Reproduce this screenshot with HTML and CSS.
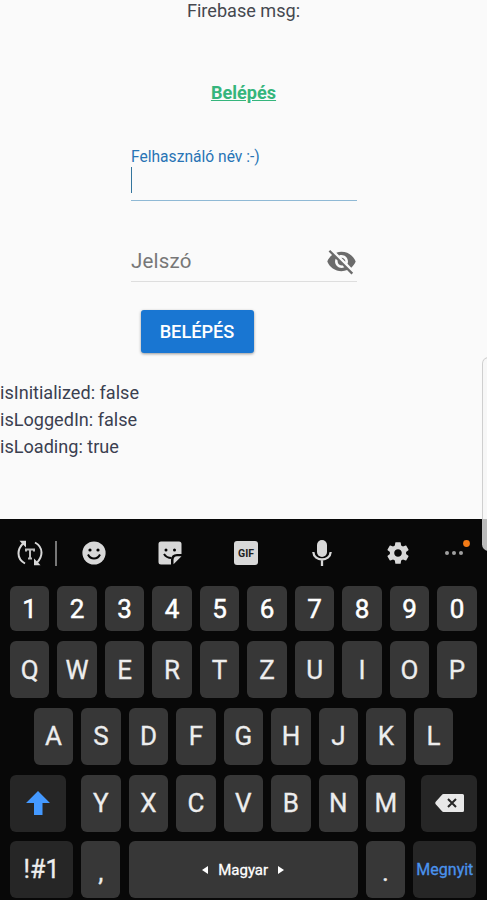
FILE: index.html
```html
<!DOCTYPE html>
<html lang="hu">
<head>
    <meta charset="UTF-8">
    <meta name="viewport" content="width=device-width, initial-scale=1.0">
    <title>Belépés</title>
    <link rel="stylesheet" href="styles.css">
</head>
<body>

<main class="page">
    <div class="message">Firebase msg:</div>
    <a class="login-link" href="#">Belépés</a>

    <form class="login-form">
        <div class="field focused">
            <label class="field-label">Felhasználó név :-)</label>
            <div class="caret"></div>
        </div>
        <div class="field password">
            <label class="placeholder">Jelszó</label>
            <svg class="eye" viewBox="0 0 24 24"><path d="M12 7c2.76 0 5 2.24 5 5 0 .65-.13 1.26-.36 1.83l2.92 2.92c1.51-1.26 2.7-2.89 3.43-4.75-1.73-4.39-6-7.5-11-7.5-1.4 0-2.74.25-3.98.7l2.16 2.16C10.74 7.13 11.35 7 12 7zM2 4.27l2.28 2.28.46.46C3.08 8.3 1.78 10.02 1 12c1.73 4.39 6 7.5 11 7.5 1.55 0 3.03-.3 4.38-.84l.42.42L19.73 22 21 20.73 3.27 3 2 4.27zM7.53 9.8l1.55 1.55c-.05.21-.08.43-.08.65 0 1.66 1.34 3 3 3 .22 0 .44-.03.65-.08l1.55 1.55c-.67.33-1.41.53-2.2.53-2.76 0-5-2.24-5-5 0-.79.2-1.53.53-2.2zm4.31-.78l3.15 3.15.02-.16c0-1.66-1.34-3-3-3l-.17.01z"/></svg>
        </div>
        <button class="submit" type="button">BELÉPÉS</button>
    </form>

    <div class="state">
        <div>isInitialized: false</div>
        <div>isLoggedIn: false</div>
        <div>isLoading: true</div>
    </div>
</main>

<!-- keyboard -->
<section class="keyboard">
    <div class="toolbar">
        <svg class="tool translate" viewBox="0 0 26 26">
            <g fill="none" stroke="currentColor" stroke-width="2">
                <path d="M8 23.500C3.500 21 1.500 17.500 1.500 13.500C1.500 9.500 3 6.500 6 3.500"/>
                <path d="M18 2.500C22.500 5 24.500 8.500 24.500 12.500C24.500 16.500 23 19.500 20 22.500"/>
            </g>
            <path d="M2.500 .8H9V7.500L6.500 5L4.500 3Z" fill="currentColor"/>
            <path d="M23.500 25.200H17V18.500L19.500 21L21.500 23Z" fill="currentColor"/>
            <path d="M9 11.500V9.500H17V11.500M13 9.500V18.500M11 18.500H15" fill="none" stroke="#bdbdbd" stroke-width="2"/>
        </svg>
        <span class="separator"></span>
        <svg class="tool" viewBox="0 0 26 26">
            <circle cx="13" cy="13" r="11.600" fill="currentColor"/>
            <circle cx="9" cy="10" r="1.600"/><circle cx="17" cy="10" r="1.600"/>
            <path d="M7 14.500C9.500 19.800 16.500 19.800 19 14.500" fill="none" stroke="#080808" stroke-width="2"/>
        </svg>
        <svg class="tool" viewBox="0 0 26 26">
            <path d="M4 1.500H22Q24.500 1.500 24.500 4V14H20Q14 14 14 20V24.500H4Q1.500 24.500 1.500 22V4Q1.500 1.500 4 1.500Z" fill="currentColor"/>
            <path d="M24.500 16.200L16.500 24.300V20Q16.500 16.200 20 16.200Z" fill="currentColor"/>
            <circle cx="9" cy="10" r="1.500"/><circle cx="17.500" cy="10" r="1.500"/>
            <path d="M7 14Q9.500 18 14.500 18" fill="none" stroke="#080808" stroke-width="2"/>
        </svg>
        <span class="tool gif"><b>GIF</b></span>
        <svg class="tool" viewBox="0 0 26 26">
            <rect x="8" y="0" width="10" height="17" rx="5" fill="currentColor"/>
            <path d="M4.300 12C5 22 21 22 21.700 12M13 19.500V26" fill="none" stroke="currentColor" stroke-width="2.300"/>
        </svg>
        <svg class="tool gear" viewBox="0 0 24 24"><path fill="currentColor" d="M19.430 12.980c.04-.32.07-.64.07-.98s-.03-.66-.07-.98l2.110-1.650c.19-.15.24-.42.12-.64l-2-3.460c-.12-.22-.39-.3-.61-.22l-2.490 1c-.52-.4-1.080-.73-1.690-.98l-.38-2.650C14.460 2.180 14.250 2 14 2h-4c-.25 0-.46.18-.49.42l-.38 2.650c-.61.25-1.170.59-1.690.98l-2.490-1c-.23-.09-.49 0-.61.22l-2 3.460c-.13.22-.07.49.12.64l2.110 1.650c-.04.32-.07.65-.07.98s.03.66.07.98l-2.110 1.650c-.19.15-.24.42-.12.64l2 3.460c.12.22.39.3.61.22l2.490-1c.52.4 1.080.73 1.690.98l.38 2.650c.03.24.24.42.49.42h4c.25 0 .46-.18.49-.42l.38-2.650c.61-.25 1.170-.59 1.690-.98l2.490 1c.23.09.49 0 .61-.22l2-3.460c.12-.22.07-.49-.12-.64l-2.110-1.650zM12 15.500c-1.930 0-3.500-1.570-3.500-3.500s1.570-3.500 3.500-3.500 3.500 1.570 3.500 3.500-1.570 3.500-3.500 3.500z"/></svg>
        <svg class="tool more" viewBox="0 0 26 26">
            <g fill="#a0a0a0"><circle cx="3" cy="13" r="2"/><circle cx="10" cy="13" r="2"/><circle cx="17" cy="13" r="2"/></g>
            <circle cx="22.500" cy="3.500" r="3.400" fill="#f37b16"/>
        </svg>
    </div>

    <div class="row numbers">
        <span class="key">1</span><span class="key">2</span><span class="key">3</span><span class="key">4</span><span class="key">5</span><span class="key">6</span><span class="key">7</span><span class="key">8</span><span class="key">9</span><span class="key">0</span>
    </div>
    <div class="row">
        <span class="key">Q</span><span class="key">W</span><span class="key">E</span><span class="key">R</span><span class="key">T</span><span class="key">Z</span><span class="key">U</span><span class="key">I</span><span class="key">O</span><span class="key">P</span>
    </div>
    <div class="row home">
        <span class="key">A</span><span class="key">S</span><span class="key">D</span><span class="key">F</span><span class="key">G</span><span class="key">H</span><span class="key">J</span><span class="key">K</span><span class="key">L</span>
    </div>
    <div class="row">
        <span class="key dark shift">
            <svg width="24" height="24" viewBox="0 0 24 24"><path d="M12 0L24 12H16.500V24H8V12H0Z" fill="#4499ff"/></svg>
        </span>
        <span class="key">Y</span><span class="key">X</span><span class="key">C</span><span class="key">V</span><span class="key">B</span><span class="key">N</span><span class="key">M</span>
        <span class="key dark backspace">
            <svg width="29" height="18" viewBox="0 0 29 18"><path d="M8.500 0H27.500Q29 0 29 1.500V16.500Q29 18 27.500 18H8.500Q7.500 18 6.800 17L.5 10Q0 9 .5 8L6.800 1Q7.500 0 8.500 0Z" fill="#e8e8e8"/><path d="M13 5L21 13M21 5L13 13" stroke="#262626" stroke-width="2"/></svg>
        </span>
    </div>
    <div class="row">
        <span class="key dark wide symbols">!#1</span>
        <span class="key punctuation">,</span>
        <span class="key space">
            <svg width="6" height="8" viewBox="0 0 6 8"><path d="M6 0V8L0 4Z" fill="#fff"/></svg>
            Magyar
            <svg width="6" height="8" viewBox="0 0 6 8"><path d="M0 0V8L6 4Z" fill="#fff"/></svg>
        </span>
        <span class="key punctuation">.</span>
        <span class="key dark wide open">Megnyit</span>
    </div>
</section>

<!-- edge panel handle -->
<div class="edge-handle"></div>

</body>
</html>
```
FILE: styles.css
```css
* {
    box-sizing: border-box;
}

body {
    margin: 0;
    height: 900px;
    overflow: hidden;
    background: #fafafa;
    font-family: Roboto, "Liberation Sans", sans-serif;
    color: #2c3e50;
}

.page {
    height: 519px;
    display: flex;
    flex-direction: column;
    font-size: 18.1px;
    line-height: 27px;
}

.message {
    height: 79px;
    line-height: 22px;
    text-align: center;
    color: #45484f;
}

.login-link {
    align-self: center;
    font-weight: 700;
    color: #35b57c;
}

.login-form {
    width: 226px;
    margin: 39px 0 0 131px;
}

.field {
    height: 56px;
    border-bottom: 1px solid #dedede;
}

.focused {
    border-bottom-color: #8fb9d5;
}

.field-label {
    display: block;
    padding-top: 2px;
    font-size: 15.6px;
    line-height: 20px;
    color: #2874b5;
}

.caret {
    width: 1px;
    height: 26px;
    background: #34759d;
}

.password {
    display: flex;
    align-items: center;
    justify-content: space-between;
    height: 42px;
    margin-top: 39px;
    padding-top: 2px;
}

.placeholder {
    font-size: 20.5px;
    letter-spacing: 0.2px;
    color: #777;
}

.eye {
    width: 31px;
    height: 31px;
    fill: #6b6b6b;
}

.submit {
    display: block;
    width: 113px;
    height: 43px;
    margin: 28px 0 0 9.5px;
    padding: 0;
    border: 0;
    border-radius: 3px;
    background: #1976d2;
    box-shadow: 0 1px 3px rgba(0, 0, 0, 0.4);
    color: #fff;
    font: 500 18.2px Roboto, sans-serif;
}

.state {
    margin-top: 26px;
    color: #3a4050;
}

/* keyboard */
.keyboard {
    height: 381px;
    padding: 0 10px;
    display: flex;
    flex-direction: column;
    gap: 9.8px;
    background: #080808;
}

.toolbar {
    height: 57.5px;
    padding: 10.5px 0 0 7px;
    display: flex;
    align-items: center;
    color: #d8d8d8;
}

.tool {
    flex: none;
    width: 26px;
    height: 26px;
    margin-right: 50px;
}

.translate {
    margin-right: 12px;
}

.separator {
    width: 2px;
    height: 25px;
    margin-right: 24px;
    background: #777;
}

.gif {
    display: flex;
    align-items: center;
    justify-content: center;
    width: 24px;
    height: 24px;
    margin: 0 51px 0 1px;
    border-radius: 3px;
    background: #d8d8d8;
    color: #222;
    font-size: 10.5px;
}

.gear {
    margin-right: 33px;
}

.more {
    margin-right: 0;
}

.row {
    height: 57px;
    flex: none;
    display: flex;
    gap: 8.2px;
}

.numbers {
    height: 45px;
}

.numbers .key {
    color: #fff;
    -webkit-text-stroke: 0.5px #fff;
}

.home {
    padding: 0 23.9px;
}

.key {
    display: flex;
    align-items: center;
    justify-content: center;
    flex: none;
    width: 39.3px;
    border-radius: 6px;
    background: #373737;
    color: #ededed;
    font-size: 26px;
    -webkit-text-stroke: 0.3px currentColor;
}

.dark {
    background: #262626;
}

.shift {
    width: 55.5px;
    margin-right: 7.6px;
}

.backspace {
    width: 55.5px;
    margin-left: 7.6px;
}

.wide {
    width: 63px;
}

.symbols {
    font-size: 25px;
}

.punctuation {
    padding-top: 5px;
}

.space {
    width: 229px;
    gap: 10px;
    color: #fff;
    font-size: 15px;
}

.open {
    color: #4a93ed;
    font-size: 16px;
}

.edge-handle {
    position: absolute;
    top: 357px;
    right: -8px;
    width: 13px;
    height: 194px;
    border: 1px solid rgba(190, 190, 190, 0.7);
    border-radius: 7px;
    background: rgba(245, 245, 245, 0.75);
}
```
